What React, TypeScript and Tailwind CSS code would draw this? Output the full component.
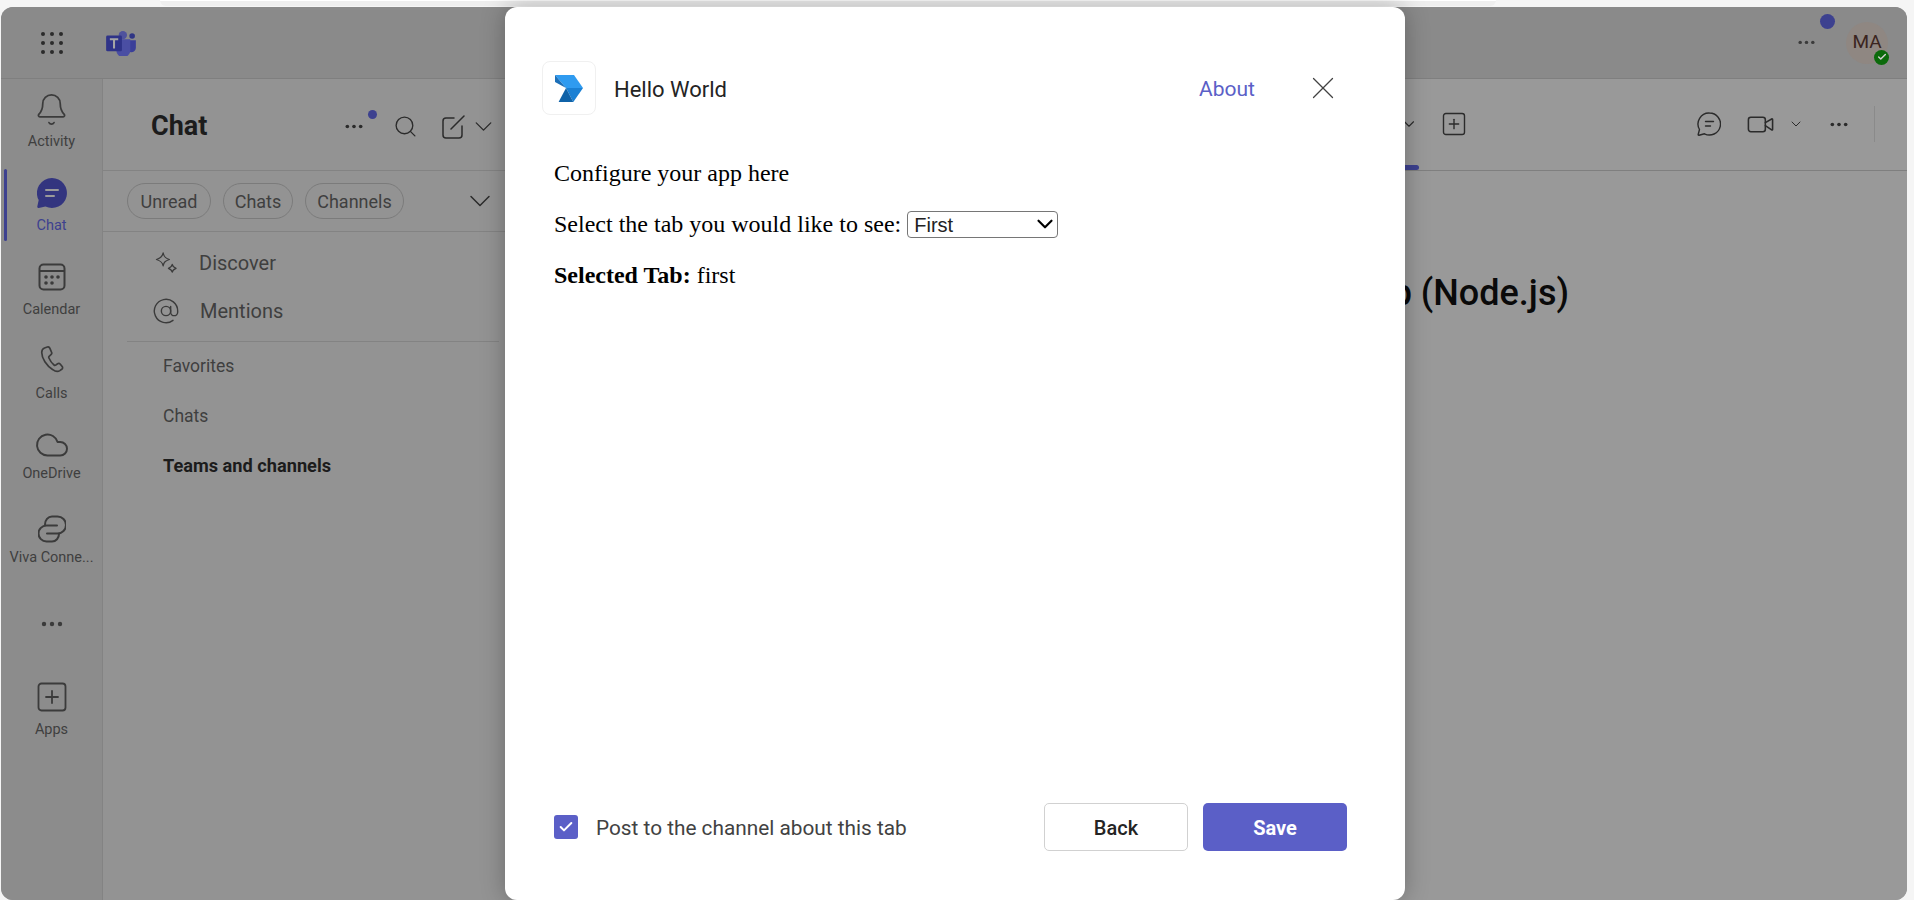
import React from "react";
import { Bell, ChevronDown, Cloud, Search, SquarePlus, Video, X, Check, AtSign } from "lucide-react";

const font = "font-['Roboto','Liberation_Sans',sans-serif]";

const Dots = ({ className }: { className: string }) => (
  <svg viewBox="0 0 24 6" className={className} fill="currentColor">
    <circle cx="4" cy="3" r="2.2" />
    <circle cx="12" cy="3" r="2.2" />
    <circle cx="20" cy="3" r="2.2" />
  </svg>
);

const ChatFilled = () => (
  <svg viewBox="0 0 30 30" className="w-[30px] h-[30px]">
    <path d="M15 0a15 15 0 1 1-6.6 28.5L1.8 30c-.9.2-1.7-.6-1.5-1.500l1.400-6.400A15 15 0 0 1 15 0z" fill="#33357f" />
    <path d="M9 12h12M9 18h8" stroke="#9a9a9a" strokeWidth="2" strokeLinecap="round" />
  </svg>
);

const ChatOutline = () => (
  <svg viewBox="0 0 24 24" className="w-6 h-6" fill="none" stroke="currentColor" strokeWidth="1.400" strokeLinecap="round" strokeLinejoin="round">
    <path d="M12.500 1a11 11 0 1 1-5 20.800L2 23.300c-.6.1-.9-.3-.8-.8l1.300-5A11 11 0 0 1 12.500 1z" />
    <path d="M8.500 9.500h8M8.500 14h5" />
  </svg>
);

const CalendarIcon = () => (
  <svg viewBox="0 0 28 28" className="w-7 h-7" fill="none" stroke="#3b3b3b" strokeWidth="2">
    <rect x="1.5" y="1.5" width="25" height="25" rx="4" />
    <path d="M2 8h24" />
    <g fill="#3b3b3b" stroke="none">
      <circle cx="8" cy="14" r="1.8" />
      <circle cx="14" cy="14" r="1.8" />
      <circle cx="20" cy="14" r="1.8" />
      <circle cx="8" cy="20" r="1.8" />
      <circle cx="14" cy="20" r="1.8" />
    </g>
  </svg>
);

const CallIcon = () => (
  <svg viewBox="0 0 30 32" className="w-[28px] h-[30px]" fill="none" stroke="#3b3b3b" strokeWidth="1.800" strokeLinejoin="round">
    <path d="M7 2l3-1c1-.3 2 .2 2.500 1l2 4.500c.5 1 .2 2-.6 2.700l-2 1.800c-.5.5-.5 1.100-.2 1.800 1.500 3.500 3 5.500 5.500 7.500.6.500 1.200.500 1.800.1l2-1.500c.9-.6 2-.5 2.700.3l2.200 2.800c.8 1 .5 2.200-.5 2.900l-2 1.400c-2 1.300-5 .9-7.500-1C9 21 4 13 4 7c0-2.500 1-4.300 3-5z" />
  </svg>
);

const VivaIcon = () => (
  <svg viewBox="0 0 28 28" className="w-7 h-7" fill="none" stroke="#3b3b3b" strokeWidth="2" strokeLinecap="round">
    <path d="M7 9.500C7 5 10 1.500 14 1.500h5.500a8.500 8.500 0 0 1 0 17H9" />
    <path d="M21 19c0 4-3 7.500-7 7.500H8.500a8 8 0 0 1 0-16H19" />
  </svg>
);

const Sparkle = () => (
  <svg viewBox="0 0 24 24" className="w-[23px] h-[23px]" fill="none" stroke="#3b3b3b" strokeWidth="1.3" strokeLinejoin="round">
    <path d="M8.500 1c.8 4 2.200 5.400 6.500 6.800-4.300 1.400-5.700 2.700-6.500 6.700C7.700 10.500 6 9.200 1.500 7.800 6 6.400 7.700 5 8.500 1z" />
    <path d="M18 13c.4 2.200 1.200 3 4 4-2.800 1-3.600 1.800-4 4-.4-2.200-1.200-3-4-4 2.800-1 3.600-1.800 4-4z" />
  </svg>
);

const ComposeIcon = () => (
  <svg viewBox="0 0 24 24" className="w-6 h-6" fill="none" stroke="#2b2b2b" strokeWidth="1.500" strokeLinecap="round" strokeLinejoin="round">
    <path d="M13 3H5a3 3 0 0 0-3 3v14a3 3 0 0 0 3 3h13a3 3 0 0 0 3-3v-9" />
    <path d="M10 14L23 1" />
  </svg>
);

const TeamsLogo = () => (
  <svg viewBox="0 0 32 28" className="w-[30px] h-[26px]">
    <circle cx="28" cy="6.500" r="3" fill="#2f3585" />
    <path d="M22 11h10v8a5 5 0 0 1-10 0z" fill="#3b3f99" />
    <circle cx="18" cy="5.500" r="4.500" fill="#4f529d" />
    <path d="M11 10h15v12a7 7 0 0 1-15 0z" fill="#4a4ea3" />
    <rect x="0" y="6" width="17" height="17" rx="1.500" fill="#2f3388" />
    <path d="M4 10h9M8.500 10v10" stroke="#a5a5a5" strokeWidth="2.200" />
  </svg>
);

const AppLogo = () => (
  <svg viewBox="0 0 28 28" className="w-7 h-7">
    <path d="M0 1h19l9 13H11z" fill="#2f9bf0" />
    <path d="M0 1l11 13L0 8z" fill="#1c6fb8" />
    <path d="M11 14h17l-9.700 14z" fill="#1a80d4" />
    <path d="M11 14l7.300 14H3.600z" fill="#0f62a8" />
  </svg>
);

const railItems: { label: string; icon: React.ReactNode; active?: boolean; gap?: string }[] = [
  { label: "Activity", icon: <Bell className="h-[35px] w-[35px]" strokeWidth={1.2} color="#3b3b3b" /> },
  { label: "Chat", icon: <ChatFilled />, active: true },
  { label: "Calendar", icon: <CalendarIcon /> },
  { label: "Calls", icon: <CallIcon /> },
  { label: "OneDrive", icon: <Cloud className="h-9 w-9" strokeWidth={1.3} color="#3b3b3b" />, gap: "mt-[4px]" },
  { label: "Viva Conne...", icon: <VivaIcon />, gap: "mt-[4px]" },
];

export default function App() {
  return (
    <div className={`relative h-[900px] w-[1914px] overflow-hidden bg-[#f5f5f5] ${font}`}>
      {/* browser strip */}
      <div className="h-[7px] px-[160px]">
        <div className="h-[6px] w-[1336px] rounded-b-md border-t border-white bg-[#eeeeee]" />
      </div>

      {/* dimmed teams app */}
      <div className="ml-px flex h-[893px] w-[1906px] flex-col overflow-hidden rounded-[12px] bg-[#959595]">
        <header className="flex h-[72px] shrink-0 items-center border-b border-[#7f7f7f] bg-[#8a8a8a] text-[#333333]">
          <div className="ml-[40px] grid w-[22px] grid-cols-3 gap-[5px]">
            {Array.from({ length: 9 }).map((_, i) => (
              <span key={i} className="h-1 w-1 rounded-full bg-[#2b2b2b]" />
            ))}
          </div>
          <div className="ml-[43px]">
            <TeamsLogo />
          </div>
          <div className="ml-auto flex items-center pr-[19px]">
            <Dots className="mr-[30px] w-[19px] text-[#3b3b3b]" />
            <div className="relative flex h-[42px] w-[42px] items-center justify-center rounded-full bg-[#8f8782] text-[19px] text-[#3a2420]">
              MA
              <span className="absolute -right-px -bottom-px flex h-[15px] w-[15px] items-center justify-center rounded-full bg-[#0b6a0b]">
                <Check className="h-[10px] w-[10px] text-[#cfcfcf]" strokeWidth={3.5} />
              </span>
              <span className="absolute -top-[8px] -left-[26px] h-[15px] w-[15px] rounded-full bg-[#3d418f]" />
            </div>
          </div>
        </header>

        <div className="flex min-h-0 flex-1">
          {/* rail */}
          <nav className="flex w-[102px] shrink-0 flex-col border-r border-[#838383] bg-[#8c8c8c] pt-[5px]">
            {railItems.map((item) => (
              <div key={item.label} className="relative flex h-[84px] flex-col items-center pt-[10px]">
                {item.active && <span className="absolute top-[1px] bottom-[11px] left-[3px] w-[3px] rounded-full bg-[#3d418f]" />}
                <div className="flex h-[30px] items-center justify-center">{item.icon}</div>
                <span className={`${item.gap ?? "mt-[8px]"} text-[14.500px] leading-[20px] whitespace-nowrap ${item.active ? "text-[#3d418f]" : "text-[#3f3f3f]"}`}>
                  {item.label}
                </span>
              </div>
            ))}
            <div className="flex h-[72px] items-center justify-center">
              <Dots className="w-[24px] text-[#3b3b3b]" />
            </div>
            <div className="flex flex-col items-center pt-[21px]">
              <div className="flex h-[32px] items-center justify-center">
                <SquarePlus className="h-9 w-9" strokeWidth={1.2} color="#3b3b3b" />
              </div>
              <span className="mt-[7px] text-[14.500px] leading-[20px] text-[#3f3f3f]">Apps</span>
            </div>
          </nav>

          {/* chat list */}
          <aside className="flex w-[420px] shrink-0 flex-col bg-[#939393] text-[#3f3f3f]">
            <div className="flex h-[92px] shrink-0 items-center border-b border-[#838383] pt-[4px] pl-[48px]">
              <h1 className="text-[27px] font-bold text-[#1c1c1c]">Chat</h1>
              <div className="relative ml-[137px] flex items-center">
                <Dots className="w-[20px] text-[#2b2b2b]" />
                <span className="absolute -top-[2px] left-[24px] h-[9px] w-[9px] rounded-full bg-[#3d418f]" />
                <Search className="ml-[29px] h-[25px] w-[25px] text-[#2b2b2b]" strokeWidth={1.3} />
                <div className="ml-[23px]">
                  <ComposeIcon />
                </div>
                <ChevronDown className="ml-[4px] h-[29px] w-[29px] text-[#2b2b2b]" strokeWidth={1.1} />
              </div>
            </div>
            <div className="flex h-[61px] shrink-0 items-center gap-3 border-b border-[#838383] pl-[24px] text-[18px]">
              <span className="flex h-[36px] w-[84px] items-center justify-center rounded-full border border-[#7b7b7b]">Unread</span>
              <span className="flex h-[36px] w-[70px] items-center justify-center rounded-full border border-[#7b7b7b]">Chats</span>
              <span className="flex h-[36px] w-[99px] items-center justify-center rounded-full border border-[#7b7b7b]">Channels</span>
              <ChevronDown className="ml-[46px] h-[36px] w-[36px] text-[#2b2b2b]" strokeWidth={1} />
            </div>
            <div className="px-[24px]">
              <div className="flex h-[48px] items-center pt-[14px] pl-[28px] text-[20px]">
                <div className="w-[44px]">
                  <Sparkle />
                </div>
                Discover
              </div>
              <div className="flex h-[48px] items-center pt-[14px] pl-[25px] text-[20px]">
                <AtSign className="mr-[20px] h-[28px] w-[28px]" strokeWidth={1.2} color="#3b3b3b" />
                Mentions
              </div>
              <div className="mt-[13px] w-[372px] border-t border-[#838383]" />
              <div className="space-y-[25px] pt-[12px] pl-[36px] text-[17.500px] leading-[25px]">
                <div>Favorites</div>
                <div>Chats</div>
                <div className="-mt-px text-[18.200px] font-bold text-[#1c1c1c]">Teams and channels</div>
              </div>
            </div>
          </aside>

          {/* conversation */}
          <main className="flex min-w-0 flex-1 flex-col bg-[#999999] text-[#2b2b2b]">
            <div className="h-[92px] shrink-0 border-b border-[#7f7f7f]">
              <div className="flex h-[86px] items-center pt-[4px] pl-[877px]">
                <ChevronDown className="h-[18px] w-[18px]" strokeWidth={1.5} />
                <SquarePlus className="ml-[22px] h-[28px] w-[28px]" strokeWidth={1.2} />
                <div className="ml-[229px]">
                  <ChatOutline />
                </div>
                <Video className="ml-[25px] h-[29px] w-[29px]" strokeWidth={1.3} />
                <ChevronDown className="ml-[13px] h-[16px] w-[16px]" strokeWidth={1.5} />
                <Dots className="ml-[25px] w-[20px]" />
                <span className="ml-[25px] h-[36px] border-l border-[#8a8a8a]" />
              </div>
              <div className="h-[5px] w-[896px] rounded-r-full bg-[#3d418f]" />
            </div>
            <div className="flex justify-end pt-[97px] pr-[338px]">
              <h2 className="text-[36px] leading-[50px] font-medium text-[#0a0a0a]">App (Node.js)</h2>
            </div>
          </main>
        </div>
      </div>

      {/* config dialog */}
      <div className="absolute top-[7px] left-[505px] flex h-[893px] w-[900px] flex-col rounded-[12px] bg-white pr-[58px] pl-[38px] shadow-[0_0_24px_rgba(0,0,0,0.28)]">
        <div className="mt-[54px] flex h-[54px] items-center">
          <div className="-ml-px flex h-[54px] w-[54px] items-center justify-center rounded-lg border border-[#f0f0f0]">
            <AppLogo />
          </div>
          <span className="ml-[18px] pt-[2px] text-[22px] text-[#242424]">Hello World</span>
          <span className="ml-auto pt-[4px] text-[21px] text-[#5b5fc7]">About</span>
          <X className="mr-[5px] ml-[49px] h-[38px] w-[38px] text-[#424242]" strokeWidth={0.8} />
        </div>

        <div className="flex-1 pt-[45px] pl-[11px] font-['Liberation_Serif',serif] text-[24px] leading-[27px] text-black">
          <p>Configure your app here</p>
          <p className="mt-[24px] flex items-center">
            Select the tab you would like to see:
            <span className="relative ml-[6px] inline-flex">
              <select className="h-[27px] w-[151px] appearance-none rounded-[4px] border border-[#767676] bg-white pl-[6px] font-['Liberation_Sans',sans-serif] text-[20px] text-[#222222]">
                <option>First</option>
                <option>Second</option>
              </select>
              <ChevronDown className="absolute top-0 right-0 h-[26px] w-[26px] text-black" strokeWidth={2} />
            </span>
          </p>
          <p className="mt-[24px]">
            <b>Selected Tab:</b> first
          </p>
        </div>

        <div className="mb-[49px] flex items-center pl-[11px]">
          <span className="flex h-[24px] w-[24px] items-center justify-center rounded-[3px] bg-[#5b5fc7]">
            <Check className="h-[16px] w-[16px] text-white" strokeWidth={3} />
          </span>
          <span className="ml-[18px] pt-[4px] text-[20.800px] text-[#424242]">Post to the channel about this tab</span>
          <button className="ml-auto h-[48px] w-[144px] rounded-[5px] border border-[#d1d1d1] bg-white pt-[2px] text-[20px] font-medium text-[#242424]">Back</button>
          <button className="ml-[15px] h-[48px] w-[144px] rounded-[5px] bg-[#5b5fc7] pt-[2px] text-[20px] font-bold text-white">Save</button>
        </div>
      </div>
    </div>
  );
}
